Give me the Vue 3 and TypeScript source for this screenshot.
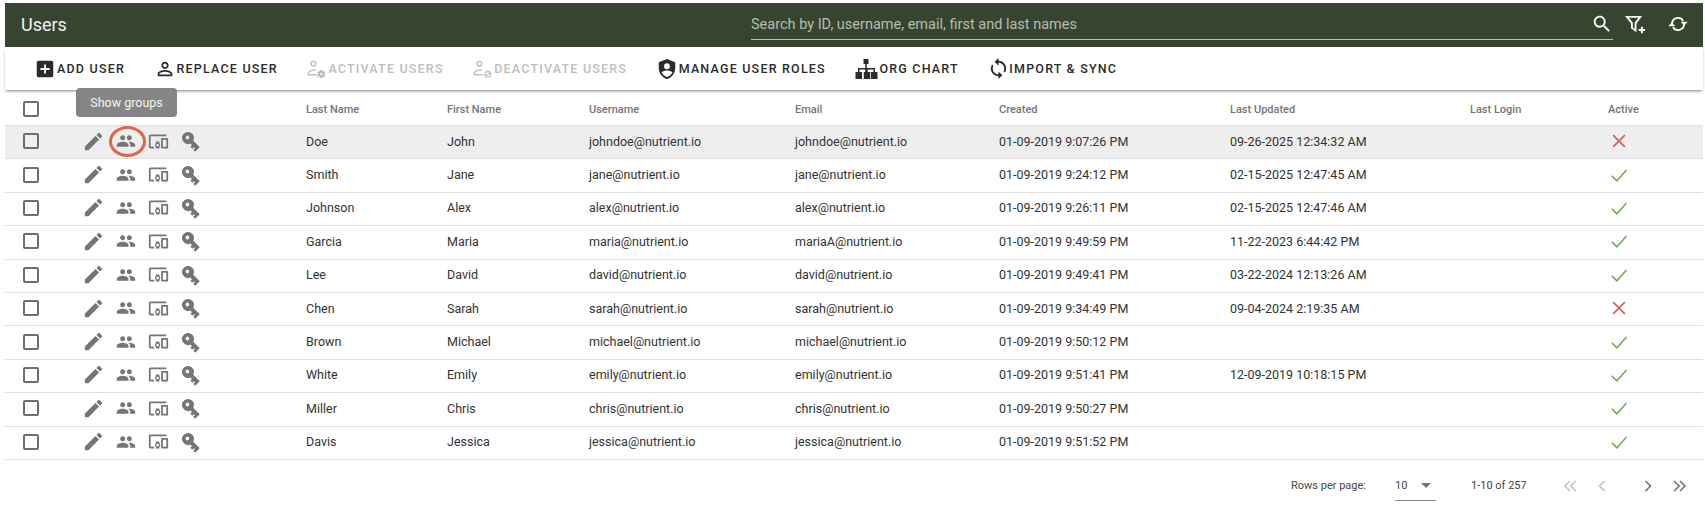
<template>
  <div class="page">
    <header class="topbar">
      <h1 class="title">Users</h1>
      <div class="search">
        <span class="search-text">Search by ID, username, email, first and last names</span>
        <svg class="search-icon" viewBox="0 0 24 24"><path :d="icons.search" /></svg>
      </div>
      <svg class="top-icon filter" viewBox="0 0 24 24"><path d="M3.2 4.2H17.8L12.6 11V19L8.6 16V11Z" /><path d="M19.5 15V22M16 18.500H23" /></svg>
      <svg class="top-icon refresh" viewBox="0 0 24 24">
        <path d="M5.500 11.500A6.500 6.500 0 0 1 17.500 8.500M18.500 12.500A6.500 6.500 0 0 1 6.500 15.500" />
        <path class="solid" d="M15 9.500H22.500L18.700 14ZM1.500 14.500H9L5.300 10Z" />
      </svg>
    </header>

    <nav class="toolbar">
      <button
        v-for="action in actions"
        :key="action.label"
        class="tool"
        :class="{ disabled: action.disabled }"
      >
        <svg
          class="tool-icon"
          viewBox="0 0 24 24"
          :style="{ width: action.size + 'px', height: action.size + 'px', marginRight: action.trim + 'px' }"
        >
          <path :d="action.icon" fill-rule="evenodd" />
        </svg>
        <span>{{ action.label }}</span>
      </button>
    </nav>

    <div class="table">
      <div class="row head">
        <div class="check"><span class="box"></span></div>
        <div></div>
        <div v-for="col in columns" :key="col" class="head-label">{{ col }}</div>
      </div>
      <div v-for="(user, i) in users" :key="user.username" class="row body" :class="{ selected: i === 0 }">
        <div class="check"><span class="box"></span></div>
        <div class="row-actions">
          <span class="cell"><svg class="a-edit" viewBox="0 0 24 24"><path :d="icons.edit" /></svg></span>
          <span class="cell" :class="{ ringed: i === 0 }"><svg class="a-people" viewBox="0 0 24 24"><path :d="icons.people" /></svg></span>
          <span class="cell"><svg class="a-device" viewBox="0 0 24 24"><path :d="icons.devices" /></svg></span>
          <span class="cell"><svg class="a-key" viewBox="0 0 24 24"><path :d="icons.key" fill-rule="evenodd" /></svg></span>
        </div>
        <div>{{ user.last }}</div>
        <div>{{ user.first }}</div>
        <div>{{ user.username }}</div>
        <div>{{ user.email }}</div>
        <div>{{ user.created }}</div>
        <div>{{ user.updated }}</div>
        <div></div>
        <div class="active">
          <svg v-if="user.active" class="yes" viewBox="0 0 24 24"><path d="M3.500 13l6 6L21 6" /></svg>
          <svg v-else class="no" viewBox="0 0 24 24"><path d="M5 5l14 14M19 5L5 19" /></svg>
        </div>
      </div>
      <div class="tooltip">Show groups</div>
    </div>

    <footer class="pager">
      <span class="rows-label">Rows per page:</span>
      <span class="rows-select">
        <span>10</span>
        <i class="caret"></i>
      </span>
      <span class="range">1-10 of 257</span>
      <svg class="pg off" viewBox="0 0 24 24"><path d="M12 6l-6 6 6 6M19 6l-6 6 6 6" /></svg>
      <svg class="pg off" viewBox="0 0 24 24"><path d="M15 6l-6 6 6 6" /></svg>
      <svg class="pg next" viewBox="0 0 24 24"><path d="M9 6l6 6-6 6" /></svg>
      <svg class="pg" viewBox="0 0 24 24"><path d="M5 6l6 6-6 6M12 6l6 6-6 6" /></svg>
    </footer>
  </div>
</template>

<script setup lang="ts">
interface User {
  last: string;
  first: string;
  username: string;
  email: string;
  created: string;
  updated: string;
  active: boolean;
}

const personOutline =
  'M8.5 3a3.5 3.5 0 1 0 0 7 3.5 3.5 0 1 0 0-7zm0 1.600a1.900 1.900 0 1 1 0 3.800 1.900 1.900 0 1 1 0-3.800zM2 20v-2.800c0-2.600 4-4.200 7-4.200 1 0 2 .2 3 .5l-1.300 1.400c-.6-.2-1.100-.3-1.700-.3-2.400 0-5.400 1.200-5.400 2.600v1.200h8.700V20H2z';

const icons = {
  search:
    'M15.500 14h-.79l-.28-.27C15.410 12.590 16 11.110 16 9.500 16 5.910 13.090 3 9.500 3S3 5.910 3 9.500 5.910 16 9.500 16c1.610 0 3.090-.59 4.230-1.570l.27.28v.79l5 4.990L20.490 19l-4.990-5zm-6 0C7.010 14 5 11.990 5 9.500S7.010 5 9.500 5 14 7.010 14 9.500 11.990 14 9.500 14z',
  addBox:
    'M19 3H5c-1.110 0-2 .9-2 2v14c0 1.100.89 2 2 2h14c1.100 0 2-.9 2-2V5c0-1.100-.9-2-2-2zm-2 10h-4v4h-2v-4H7v-2h4V7h2v4h4v2z',
  person:
    'M12 5.900c1.160 0 2.100.94 2.100 2.100s-.94 2.100-2.100 2.100S9.900 9.160 9.900 8s.94-2.100 2.100-2.100m0 9c2.970 0 6.100 1.460 6.100 2.100v1.100H5.900V17c0-.64 3.130-2.100 6.100-2.100M12 4C9.790 4 8 5.790 8 8s1.790 4 4 4 4-1.790 4-4-1.790-4-4-4zm0 9c-2.670 0-8 1.340-8 4v3h16v-3c0-2.660-5.330-4-8-4z',
  personGear:
    personOutline +
    'M16.500 13.500h2l.3 1.400 1.200.6 1.300-.5 1 1.700-1.100.9v1.400l1.100.9-1 1.700-1.300-.5-1.200.6-.3 1.400h-2l-.3-1.400-1.200-.6-1.300.5-1-1.700 1.100-.9v-1.400l-1.100-.9 1-1.700 1.300.5 1.200-.6zM17.500 17a1.300 1.300 0 1 0 0 2.600 1.300 1.300 0 1 0 0-2.600z',
  personBlock:
    personOutline +
    'M18 14.500a4 4 0 1 0 0 8 4 4 0 1 0 0-8zM18 15.900a2.600 2.600 0 0 0-2.100 4.100l3.600-3.600a2.600 2.600 0 0 0-1.500-.5zM20.100 17.400l-3.600 3.600a2.600 2.600 0 0 0 3.600-3.600z',
  shield:
    'M12 1L3 4.500v6.500c0 5.500 3.800 10.700 9 12 5.200-1.300 9-6.500 9-12V4.500L12 1zM12 5.800a3.200 3.200 0 1 0 0 6.400 3.200 3.200 0 1 0 0-6.400zM6 15.500c1.500-1.500 4-2 6-2s4.500.5 6 2c-1.200 2.500-3.300 4.300-6 5.300-2.700-1-4.800-2.800-6-5.300z',
  sitemap:
    'M9.500 2h5v5h-1.700v4h8.200v4h2.500v7h-6.500v-7h2.500v-2.500h-5.700V15h2.450v7h-6.500v-7H11.200v-2.500H5.500V15H8v7H1.500v-7H4v-4h7.200V7H9.500V2z',
  sync:
    'M12 4V1L8 5l4 4V6c3.310 0 6 2.690 6 6 0 1.010-.25 1.970-.7 2.800l1.460 1.460C19.540 15.030 20 13.570 20 12c0-4.420-3.580-8-8-8zm0 14c-3.310 0-6-2.690-6-6 0-1.010.25-1.970.7-2.800L5.240 7.740C4.460 8.970 4 10.430 4 12c0 4.420 3.580 8 8 8v3l4-4-4-4v3z',
  edit:
    'M3 17.250V21h3.750L17.810 9.940l-3.750-3.750L3 17.250zM20.710 7.040c.39-.39.39-1.020 0-1.410l-2.340-2.340c-.39-.39-1.020-.39-1.410 0l-1.830 1.830 3.750 3.750 1.830-1.830z',
  people:
    'M16 11c1.660 0 2.990-1.340 2.990-3S17.660 5 16 5c-1.660 0-3 1.340-3 3s1.340 3 3 3zm-8 0c1.660 0 2.990-1.340 2.990-3S9.660 5 8 5C6.340 5 5 6.340 5 8s1.340 3 3 3zm0 2c-2.330 0-7 1.170-7 3.500V19h14v-2.500c0-2.330-4.670-3.500-7-3.500zm8 0c-.29 0-.62.02-.97.05 1.160.84 1.970 1.970 1.970 3.450V19h6v-2.500c0-2.330-4.670-3.500-7-3.500z',
  devices:
    'M3 6h18V4H3c-1.100 0-2 .9-2 2v12c0 1.100.9 2 2 2h4v-2H3V6zm10 6H9v1.780c-.61.55-1 1.330-1 2.220s.39 1.670 1 2.220V20h4v-1.780c.61-.55 1-1.340 1-2.220s-.39-1.670-1-2.220V12zm-2 5.500c-.83 0-1.500-.67-1.500-1.500s.67-1.500 1.500-1.500 1.500.67 1.500 1.500-.67 1.500-1.500 1.500zM22 8h-6c-.5 0-1 .5-1 1v10c0 .5.5 1 1 1h6c.5 0 1-.5 1-1V9c0-.5-.5-1-1-1zm-1 10h-4v-8h4v8z',
  key:
    'M7.500 5.500a6.500 6.500 0 1 0 6 9H16V17h3v-2.500h1.500V17h3V10H13.500a6.500 6.500 0 0 0-6-4.500zM6.500 10a2 2 0 1 0 0 4 2 2 0 1 0 0-4z',
};

const actions = [
  { label: 'ADD USER', icon: icons.addBox, disabled: false, size: 22, trim: 0 },
  { label: 'REPLACE USER', icon: icons.person, disabled: false, size: 22, trim: 0 },
  { label: 'ACTIVATE USERS', icon: icons.personGear, disabled: true, size: 21, trim: 0 },
  { label: 'DEACTIVATE USERS', icon: icons.personBlock, disabled: true, size: 21, trim: 0 },
  { label: 'MANAGE USER ROLES', icon: icons.shield, disabled: false, size: 22, trim: 0 },
  { label: 'ORG CHART', icon: icons.sitemap, disabled: false, size: 24, trim: 0 },
  { label: 'IMPORT & SYNC', icon: icons.sync, disabled: false, size: 23, trim: -2 },
];

const columns = ['Last Name', 'First Name', 'Username', 'Email', 'Created', 'Last Updated', 'Last Login', 'Active'];

const users: User[] = [
  { last: 'Doe', first: 'John', username: 'johndoe@nutrient.io', email: 'johndoe@nutrient.io', created: '01-09-2019 9:07:26 PM', updated: '09-26-2025 12:34:32 AM', active: false },
  { last: 'Smith', first: 'Jane', username: 'jane@nutrient.io', email: 'jane@nutrient.io', created: '01-09-2019 9:24:12 PM', updated: '02-15-2025 12:47:45 AM', active: true },
  { last: 'Johnson', first: 'Alex', username: 'alex@nutrient.io', email: 'alex@nutrient.io', created: '01-09-2019 9:26:11 PM', updated: '02-15-2025 12:47:46 AM', active: true },
  { last: 'Garcia', first: 'Maria', username: 'maria@nutrient.io', email: 'mariaA@nutrient.io', created: '01-09-2019 9:49:59 PM', updated: '11-22-2023 6:44:42 PM', active: true },
  { last: 'Lee', first: 'David', username: 'david@nutrient.io', email: 'david@nutrient.io', created: '01-09-2019 9:49:41 PM', updated: '03-22-2024 12:13:26 AM', active: true },
  { last: 'Chen', first: 'Sarah', username: 'sarah@nutrient.io', email: 'sarah@nutrient.io', created: '01-09-2019 9:34:49 PM', updated: '09-04-2024 2:19:35 AM', active: false },
  { last: 'Brown', first: 'Michael', username: 'michael@nutrient.io', email: 'michael@nutrient.io', created: '01-09-2019 9:50:12 PM', updated: '', active: true },
  { last: 'White', first: 'Emily', username: 'emily@nutrient.io', email: 'emily@nutrient.io', created: '01-09-2019 9:51:41 PM', updated: '12-09-2019 10:18:15 PM', active: true },
  { last: 'Miller', first: 'Chris', username: 'chris@nutrient.io', email: 'chris@nutrient.io', created: '01-09-2019 9:50:27 PM', updated: '', active: true },
  { last: 'Davis', first: 'Jessica', username: 'jessica@nutrient.io', email: 'jessica@nutrient.io', created: '01-09-2019 9:51:52 PM', updated: '', active: true },
];
</script>

<style>
html,
body {
  margin: 0;
  background: #fff;
}
</style>

<style scoped>
.page {
  box-sizing: border-box;
  width: 1705px;
  height: 508px;
  padding: 3px 2px 0 5px;
  overflow: hidden;
  font-family: Roboto, "Liberation Sans", sans-serif;
  color: #333;
}

.topbar {
  display: flex;
  align-items: flex-start;
  height: 44px;
  background: #364430;
  color: #fff;
  padding-left: 16px;
}

.title {
  margin: 0;
  width: 730px;
  height: 44px;
  line-height: 44px;
  font-size: 18px;
  font-weight: 400;
  color: #f2f2f2;
}

.search {
  display: flex;
  align-items: center;
  justify-content: space-between;
  box-sizing: border-box;
  width: 862px;
  height: 37px;
  padding-top: 5px;
  border-bottom: 1px solid #b9c4ae;
  font-size: 14.5px;
  color: #b7bdb1;
}

.search-text {
  padding-top: 2px;
}

.search-icon {
  width: 22px;
  height: 22px;
  fill: #fff;
}

.top-icon {
  width: 22px;
  height: 22px;
  margin-top: 10px;
  fill: none;
  stroke: #fff;
  stroke-width: 2;
}

.top-icon .solid {
  fill: #fff;
  stroke: none;
}

.filter {
  margin-left: 11px;
}

.refresh {
  margin-left: 21px;
}

.toolbar {
  display: flex;
  align-items: center;
  gap: 28.5px;
  height: 43px;
  padding-left: 29px;
  background: #fff;
  position: relative;
  z-index: 1;
  box-shadow: 0 2px 3px -1px rgba(0, 0, 0, 0.5);
}

.tool {
  display: flex;
  align-items: center;
  gap: 1px;
  padding: 0;
  border: 0;
  background: none;
  font-family: inherit;
  font-size: 12.5px;
  font-weight: 500;
  letter-spacing: 1.2px;
  color: #2b2b2b;
  white-space: nowrap;
}

.tool-icon {
  fill: #2b2b2b;
  flex: none;
}

.tool.disabled {
  color: #bdbdbd;
}

.tool.disabled .tool-icon {
  fill: #bdbdbd;
}

.table {
  position: relative;
}

.row {
  display: grid;
  grid-template-columns: 68px 233px 141px 142px 206px 204px 231px 240px 138px 1fr;
  align-items: center;
  font-size: 12.5px;
  border-bottom: 1px solid #e0e0e0;
  box-sizing: border-box;
}

.head {
  height: 36px;
  padding-top: 3px;
  font-size: 11px;
  font-weight: 500;
  color: #757575;
}

.head-label {
  padding-top: 1px;
}

.body {
  height: 33.4px;
  padding-bottom: 2px;
}

.selected {
  background: #eeeeee;
}

.check {
  padding-left: 18px;
  display: flex;
}

.box {
  display: block;
  box-sizing: border-box;
  width: 16px;
  height: 16px;
  border: 2px solid #6e6e6e;
  border-radius: 2px;
}

.row-actions {
  display: flex;
  align-items: center;
  padding-left: 4px;
}

.cell {
  position: relative;
  display: flex;
  align-items: center;
  justify-content: center;
  width: 32.6px;
  height: 24px;
}

.cell svg {
  display: block;
  fill: #757575;
}

.a-edit {
  width: 23px;
  height: 23px;
}

.a-people {
  width: 20px;
  height: 20px;
}

.a-device {
  width: 21px;
  height: 21px;
}

.a-key {
  width: 22px;
  height: 22px;
  transform: rotate(45deg);
}

.ringed::after {
  content: "";
  position: absolute;
  left: -1px;
  top: -3px;
  box-sizing: border-box;
  width: 37px;
  height: 31px;
  border: 3px solid #d9674a;
  border-radius: 50%;
}

.active {
  display: flex;
  padding-left: 1px;
}

.active svg {
  width: 20px;
  height: 20px;
  fill: none;
  stroke-width: 1.9;
}

.yes {
  stroke: #6fae54;
}

.no {
  stroke: #dc5a4b;
}

.tooltip {
  position: absolute;
  z-index: 2;
  left: 71px;
  top: -2px;
  box-sizing: border-box;
  width: 101px;
  height: 29px;
  padding-top: 7px;
  background: #858585;
  border-radius: 4px;
  color: #f4f4f4;
  font-size: 12.5px;
  text-align: center;
}

.pager {
  display: flex;
  align-items: center;
  height: 52px;
  font-size: 11px;
  color: #444;
  padding-left: 1286px;
}

.rows-label {
  width: 104px;
  white-space: nowrap;
}

.rows-select {
  display: flex;
  align-items: center;
  justify-content: space-between;
  box-sizing: border-box;
  width: 41px;
  height: 31px;
  border-bottom: 1px solid #8a8a8a;
  padding: 0 5px 0 0;
}

.caret {
  width: 0;
  height: 0;
  border-left: 5px solid transparent;
  border-right: 5px solid transparent;
  border-top: 5px solid #757575;
}

.range {
  margin-left: 35px;
  width: 87px;
  white-space: nowrap;
}

.pg {
  flex: none;
  width: 20px;
  height: 20px;
  margin: 0 10px 0 2px;
  fill: none;
  stroke: #757575;
  stroke-width: 2;
}

.pg.off {
  stroke: #c4c4c4;
}

.pg.next {
  margin-left: 16px;
}
</style>
